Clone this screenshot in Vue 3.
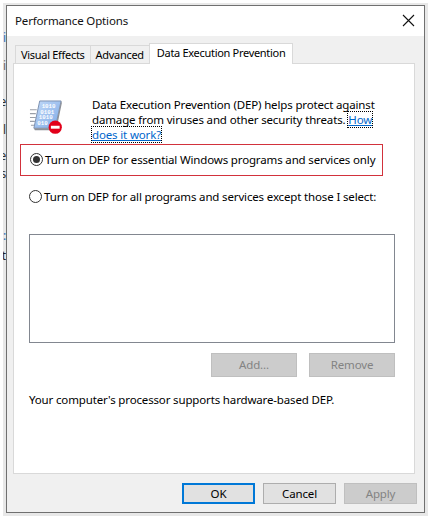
<template>
  <div class="page">
    <div class="backdrop">
      <div class="strip">
        <span
          v-for="(frag, index) in fragments"
          :key="index"
          class="frag"
          :style="{ marginTop: `${frag.gap}px`, color: frag.color }"
        >{{ frag.text }}</span>
      </div>
      <div class="window">
        <div class="titlebar">
          <span class="title">Performance Options</span>
          <svg class="close" width="13" height="13" viewBox="0 0 13 13">
            <path d="M1 1 L12 12 M12 1 L1 12" stroke="#111" stroke-width="1.1" fill="none" />
          </svg>
        </div>

        <div class="body">
          <div class="tabs">
            <div v-for="tab in tabs" :key="tab" class="tab">{{ tab }}</div>
            <div class="tab active">Data Execution Prevention</div>
          </div>

          <div class="panel">
            <div class="intro">
              <svg class="dep-icon" width="35" height="35" viewBox="0 0 36 36">
                <defs>
                  <linearGradient id="sheet" x1="0" y1="0" x2="1" y2="1">
                    <stop offset="0" stop-color="#c2daf8" />
                    <stop offset="1" stop-color="#7ea9e6" />
                  </linearGradient>
                </defs>
                <path d="M1 10 H8 M1 14 H7 M1 18 H7 M1 22 H6 M2 26 H6" stroke="#9a9fa8" stroke-width="1.2" />
                <path d="M11 1 L33 1 L27 29 L5 29 Z" fill="url(#sheet)" stroke="#7b8fb0" stroke-width="1" />
                <path d="M5 29 L27 29 L33 1 L33.8 3 L28 31 L6 31 Z" fill="#8d9097" />
                <text x="13" y="8" class="bits">1010</text>
                <text x="11.5" y="14" class="bits">0101</text>
                <text x="10" y="20" class="bits">1010</text>
                <text x="8.5" y="26" class="bits">010</text>
                <circle cx="27" cy="28" r="6.8" fill="#e2001a" />
                <rect x="22.5" y="26.5" width="9" height="3" fill="#fff" />
              </svg>
              <p class="intro-text">
                Data Execution Prevention (DEP) helps protect against<br />
                damage from viruses and other security threats. <a class="link">How</a><br />
                <a class="link">does it work?</a>
              </p>
            </div>

            <div class="highlight">
              <label class="radio-row">
                <span class="radio checked"></span>
                Turn on DEP for essential Windows programs and services only
              </label>
            </div>

            <label class="radio-row second">
              <span class="radio"></span>
              Turn on DEP for all programs and services except those I select:
            </label>

            <div class="listbox"></div>

            <div class="list-actions">
              <button class="btn disabled wide">Add...</button>
              <button class="btn disabled wide">Remove</button>
            </div>

            <p class="support">Your computer's processor supports hardware-based DEP.</p>
          </div>

          <div class="footer">
            <button class="btn default">OK</button>
            <button class="btn">Cancel</button>
            <button class="btn disabled">Apply</button>
          </div>
        </div>
      </div>
    </div>
  </div>
</template>

<script setup>
const tabs = ['Visual Effects', 'Advanced']

// bits of the window behind the dialog that stick out on the left
const fragments = [
  { text: 'i', gap: 26, color: '#1f6fb5' },
  { text: 'i', gap: 14, color: '#666' },
  { text: 'e', gap: 22, color: '#333' },
  { text: 'l', gap: 14, color: '#333' },
  { text: 'e', gap: 12, color: '#333' },
  { text: 's', gap: 4, color: '#333' },
  { text: ':', gap: 48, color: '#1f6fb5' },
  { text: 't', gap: 6, color: '#222' }
]
</script>

<style scoped>
.page {
  width: 431px;
  height: 519px;
  box-sizing: border-box;
  padding: 3px;
  background: #fff;
  font-family: "Noto Sans", "Open Sans", sans-serif;
  font-size: 11.5px;
  letter-spacing: -0.15px;
  color: #000;
  overflow: hidden;
}

.backdrop {
  display: flex;
  height: 513px;
  box-sizing: border-box;
  padding: 2px 3px 3px 0;
  background: #e8e8e8;
}

.strip {
  width: 3px;
  flex: none;
  display: flex;
  flex-direction: column;
  align-items: flex-end;
  overflow: hidden;
}

.frag {
  height: 14px;
  line-height: 14px;
  font-size: 12px;
}

.window {
  width: 419px;
  height: 508px;
  flex: none;
  box-sizing: border-box;
  border: 1px solid #707070;
  display: flex;
  flex-direction: column;
  background: #f0f0f0;
}

.titlebar {
  height: 30px;
  flex: none;
  box-sizing: border-box;
  display: flex;
  align-items: center;
  justify-content: space-between;
  padding: 0 9px 2px 8px;
  background: #fff;
}

.title {
  color: #111;
}

.body {
  flex: 1;
  display: flex;
  flex-direction: column;
  padding: 7px 8px 9px 6px;
}

.tabs {
  display: flex;
  align-items: flex-end;
  height: 20px;
  padding-left: 2px;
  position: relative;
  z-index: 1;
  font-size: 11px;
  letter-spacing: -0.3px;
}

.tab {
  height: 18px;
  box-sizing: border-box;
  padding: 0 5px;
  line-height: 17px;
  border: 1px solid #d9d9d9;
  border-bottom: none;
  margin-right: -1px;
  white-space: nowrap;
}

.tab.active {
  height: 21px;
  margin-bottom: -1px;
  padding: 0 7px;
  line-height: 17px;
  background: #fff;
}

.panel {
  width: 402px;
  height: 411px;
  flex: none;
  box-sizing: border-box;
  border: 1px solid #d9d9d9;
  background: #fff;
  padding: 33px 19px 0 15px;
}

.intro {
  display: flex;
  align-items: flex-start;
  height: 47px;
}

.dep-icon {
  flex: none;
  margin: 3px 28px 0 0;
}

.bits {
  font-family: "Liberation Mono", monospace;
  font-size: 6px;
  font-weight: 700;
  letter-spacing: 0;
  fill: #fff;
}

.intro-text {
  margin: 0;
  line-height: 15px;
  white-space: nowrap;
}

.link {
  color: #0066cc;
  text-decoration: underline;
  outline: 1px dotted #000;
  outline-offset: 0;
}

.highlight {
  width: 363px;
  height: 32px;
  box-sizing: border-box;
  margin-left: -9px;
  padding: 0 0 2px 9px;
  border: 1px solid #d2323c;
  display: flex;
  align-items: center;
}

.radio-row {
  display: flex;
  align-items: center;
  gap: 2px;
  white-space: nowrap;
}

.radio-row.second {
  margin-top: 13px;
  height: 15px;
}

.radio {
  width: 13px;
  height: 13px;
  flex: none;
  box-sizing: border-box;
  border: 1px solid #333;
  border-radius: 50%;
  display: flex;
  align-items: center;
  justify-content: center;
}

.radio.checked::after {
  content: "";
  width: 7px;
  height: 7px;
  border-radius: 50%;
  background: #333;
}

.listbox {
  width: 366px;
  height: 109px;
  box-sizing: border-box;
  margin-top: 30px;
  border: 1px solid #828790;
}

.list-actions {
  width: 366px;
  display: flex;
  justify-content: flex-end;
  gap: 12px;
  margin-top: 10px;
}

.btn {
  width: 73px;
  height: 21px;
  box-sizing: border-box;
  padding: 0;
  border: 1px solid #adadad;
  background: #e1e1e1;
  font: inherit;
  letter-spacing: inherit;
  color: #000;
}

.btn.wide {
  width: 86px;
  height: 24px;
  padding-bottom: 2px;
}

.btn.disabled {
  background: #cccccc;
  border-color: #bfbfbf;
  color: #838383;
}

.btn.default {
  border: 2px solid #0078d7;
}

.support {
  margin: 15px 0 0;
  line-height: 16px;
  white-space: nowrap;
}

.footer {
  display: flex;
  justify-content: flex-end;
  gap: 8px;
  margin-top: 9px;
  width: 404px;
}
</style>
